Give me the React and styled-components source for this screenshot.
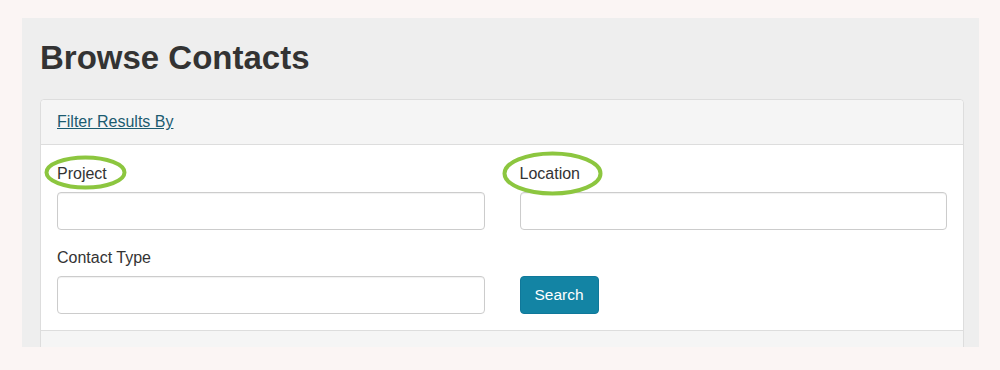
import styled, { createGlobalStyle } from "styled-components"

const GlobalStyle = createGlobalStyle`
  html, body {
    margin: 0;
    background: #fbf5f4;
    font-family: "Liberation Sans", Arial, sans-serif;
    color: #333;
  }
`

export default function App() {
  return (
    <>
      <GlobalStyle />
      <Page>
        <Panel>
          <Title>Browse Contacts</Title>
          <Card>
            <CardHeader>
              <FilterLink href="#">Filter Results By</FilterLink>
            </CardHeader>
            <CardBody>
              <FormGroup>
                <Label>
                  Project
                  <Ring $left={-13} $top={-9} $w={83} $h={35} />
                </Label>
                <Input type="text" />
              </FormGroup>
              <FormGroup>
                <Label>
                  Location
                  <Ring $left={-18} $top={-13} $w={101} $h={45} />
                </Label>
                <Input type="text" />
              </FormGroup>
              <FormGroup>
                <Label>Contact Type</Label>
                <Input type="text" />
              </FormGroup>
              <FormGroup>
                <Label aria-hidden="true">&nbsp;</Label>
                <SearchButton type="button">Search</SearchButton>
              </FormGroup>
            </CardBody>
            <CardFooter />
          </Card>
        </Panel>
      </Page>
    </>
  )
}

// green highlight ring drawn around a label
function Ring({ $left, $top, $w, $h }) {
  return (
    <RingSvg
      style={{ left: $left, top: $top }}
      width={$w}
      height={$h}
      viewBox={`0 0 ${$w} ${$h}`}
    >
      <ellipse
        cx={$w / 2}
        cy={$h / 2}
        rx={$w / 2 - 2.5}
        ry={$h / 2 - 2.5}
        fill="none"
        stroke="#8cc63f"
        strokeWidth="4"
      />
    </RingSvg>
  )
}

const Page = styled.div`
  padding: 18px 21px 0 22px;
`

const Panel = styled.div`
  background: #eeeeee;
  height: 329px;
  overflow: hidden;
  padding: 22px 15px 0 18px;
  box-sizing: border-box;
`

const Title = styled.h1`
  margin: 0 0 23px;
  font-size: 33px;
  line-height: 1.1;
  font-weight: 700;
  color: #333;
`

const Card = styled.div`
  background: #fff;
  border: 1px solid #dddddd;
  border-radius: 4px;
`

const CardHeader = styled.div`
  background: #f5f5f5;
  border-bottom: 1px solid #dddddd;
  border-radius: 4px 4px 0 0;
  padding: 12px 16px;
  line-height: 20px;
`

const FilterLink = styled.a`
  font-size: 16px;
  color: #1b5b70;
  text-decoration: underline;
`

const CardBody = styled.div`
  display: grid;
  grid-template-columns: 1fr 1fr;
  column-gap: 35px;
  row-gap: 18px;
  padding: 19px 16px 16px;
`

const FormGroup = styled.div`
  display: flex;
  flex-direction: column;
  align-items: flex-start;
`

const Label = styled.label`
  position: relative;
  display: block;
  font-size: 16px;
  line-height: 20px;
  margin-bottom: 8px;
  color: #333;
`

const RingSvg = styled.svg`
  position: absolute;
  pointer-events: none;
  overflow: visible;
  z-index: 1;
`

const Input = styled.input`
  box-sizing: border-box;
  width: 100%;
  height: 38px;
  border: 1px solid #cccccc;
  border-radius: 4px;
  background: #fff;
  box-shadow: inset 0 1px 1px rgba(0, 0, 0, 0.06);
  font: inherit;
  padding: 6px 12px;
`

const SearchButton = styled.button`
  height: 38px;
  padding: 0 14px;
  border: 1px solid #10789a;
  border-radius: 4px;
  background: #1384a4;
  color: #fff;
  font-family: "Liberation Sans", Arial, sans-serif;
  font-size: 15.5px;
  cursor: pointer;
`

const CardFooter = styled.div`
  background: #f5f5f5;
  border-top: 1px solid #dddddd;
  height: 40px;
`
